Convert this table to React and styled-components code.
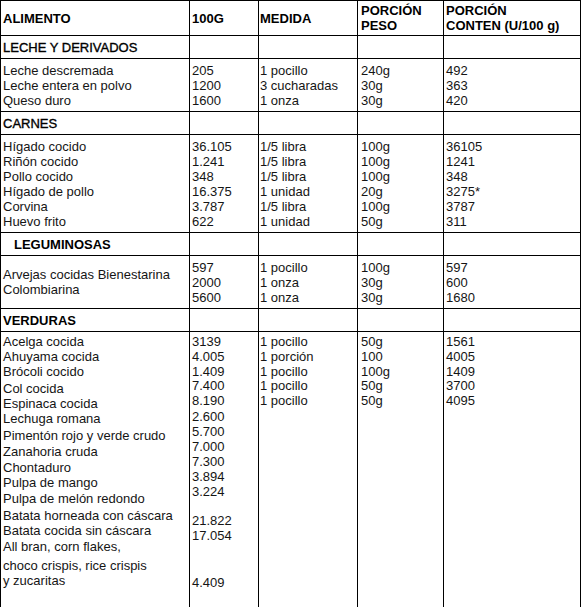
import React from "react"
import styled, { createGlobalStyle } from "styled-components"

// anchos de columna (incluye el borde derecho de cada celda)
const COLS = [189, 69, 99, 86, 137]
const PADS = [2, 2, 1, 3, 2]

const GlobalStyle = createGlobalStyle`
	html, body {
		margin: 0;
		padding: 0;
		overflow: hidden;
		background: #ffffff;
	}
`

const Sheet = styled.div`
	display: flex;
	flex-direction: column;
	width: 581px;
	box-sizing: border-box;
	border-top: 1px solid #000;
	border-left: 1px solid #000;
	font-family: "Liberation Sans", Arial, sans-serif;
	font-size: 13px;
	line-height: 15px;
	color: #151515;
`

const Row = styled.div`
	display: grid;
	grid-template-columns: ${COLS.map((w) => `${w}px`).join(" ")};
	height: ${(p) => p.$h}px;
	flex-shrink: 0;
`

const Cell = styled.div`
	box-sizing: border-box;
	display: flex;
	flex-direction: column;
	justify-content: ${(p) => (p.$top ? "flex-start" : "center")};
	padding: ${(p) => (p.$top ? 2 : 0)}px 0 0 ${(p) => p.$pad}px;
	border-right: 1px solid #000;
	border-bottom: 1px solid #000;
	white-space: nowrap;
	overflow: hidden;
`

const Line = styled.div`
	height: 15px;
	flex-shrink: 0;
	margin-top: ${(p) => p.$shift || 0}px;
	font-weight: ${(p) => (p.$bold ? 700 : 400)};
	color: ${(p) => (p.$bold ? "#000" : "inherit")};
`

const SectionLabel = styled.div`
	height: 15px;
	padding-left: ${(p) => (p.$indent ? 11 : 0)}px;
	color: #000;
	font-weight: ${(p) => (p.$strong ? 700 : 400)};
	-webkit-text-stroke: ${(p) => (p.$strong ? 0 : 0.35)}px #000;
`

// una línea puede ser texto o [texto, desplazamiento]
const renderLines = (lines, bold) =>
	lines.map((l, i) => {
		const [text, shift] = Array.isArray(l) ? l : [l, 0]
		return (
			<Line key={i} $shift={shift} $bold={bold}>
				{text}
			</Line>
		)
	})

const header = [
	["ALIMENTO"],
	["100G"],
	["MEDIDA"],
	["PORCIÓN", "PESO"],
	["PORCIÓN", "CONTEN (U/100 g)"],
]

const groups = [
	{
		title: "LECHE Y DERIVADOS",
		h: 53,
		cols: [
			["Leche descremada", "Leche entera en polvo", "Queso duro"],
			["205", "1200", "1600"],
			["1 pocillo", "3 cucharadas", "1 onza"],
			["240g", "30g", "30g"],
			["492", "363", "420"],
		],
	},
	{
		title: "CARNES",
		h: 98,
		cols: [
			["Hígado cocido", "Riñón cocido", "Pollo cocido", "Hígado de pollo", "Corvina", "Huevo frito"],
			["36.105", "1.241", "348", "16.375", "3.787", "622"],
			["1/5 libra", "1/5 libra", "1/5 libra", "1 unidad", "1/5 libra", "1 unidad"],
			["100g", "100g", "100g", "20g", "100g", "50g"],
			["36105", "1241", "348", "3275*", "3787", "311"],
		],
	},
	{
		title: "LEGUMINOSAS",
		indent: true,
		strong: true,
		h: 53,
		cols: [
			["Arvejas cocidas Bienestarina", "Colombiarina"],
			["597", "2000", "5600"],
			["1 pocillo", "1 onza", "1 onza"],
			["100g", "30g", "30g"],
			["597", "600", "1680"],
		],
	},
	{
		title: "VERDURAS",
		strong: true,
		h: 276,
		top: true,
		cols: [
			[
				"Acelga cocida",
				"Ahuyama cocida",
				"Brócoli cocido",
				["Col cocida", 2],
				"Espinaca cocida",
				"Lechuga romana",
				["Pimentón rojo y verde crudo", 2],
				["Zanahoria cruda", 1],
				["Chontaduro", 1],
				"Pulpa de mango",
				["Pulpa de melón redondo", 1],
				["Batata horneada con cáscara", 2],
				"Batata cocida sin cáscara",
				["All bran, corn flakes,", 1],
				["choco crispis, rice crispis", 4],
				"y zucaritas",
			],
			[
				"3139",
				"4.005",
				"1.409",
				["7.400", -1],
				"8.190",
				["2.600", 1],
				"5.700",
				"7.000",
				"7.300",
				"3.894",
				"3.224",
				["21.822", 14],
				"17.054",
				["4.409", 32],
			],
			["1 pocillo", "1 porción", "1 pocillo", ["1 pocillo", -1], "1 pocillo"],
			["50g", "100", "100g", ["50g", -1], "50g"],
			["1561", "4005", "1409", ["3700", -1], "4095"],
		],
	},
]

export default function App() {
	return (
		<>
			<GlobalStyle />
			<Sheet>
				<Row $h={35}>
					{header.map((lines, i) => (
						<Cell key={i} $pad={PADS[i]}>
							{renderLines(lines, true)}
						</Cell>
					))}
				</Row>
				{groups.map((g) => (
					<React.Fragment key={g.title}>
						<Row $h={23}>
							{COLS.map((_, i) => (
								<Cell key={i} $pad={PADS[i]}>
									{i === 0 && (
										<SectionLabel $indent={g.indent} $strong={g.strong}>
											{g.title}
										</SectionLabel>
									)}
								</Cell>
							))}
						</Row>
						<Row $h={g.h}>
							{g.cols.map((lines, i) => (
								<Cell key={i} $pad={PADS[i]} $top={g.top}>
									{renderLines(lines)}
								</Cell>
							))}
						</Row>
					</React.Fragment>
				))}
			</Sheet>
		</>
	)
}
